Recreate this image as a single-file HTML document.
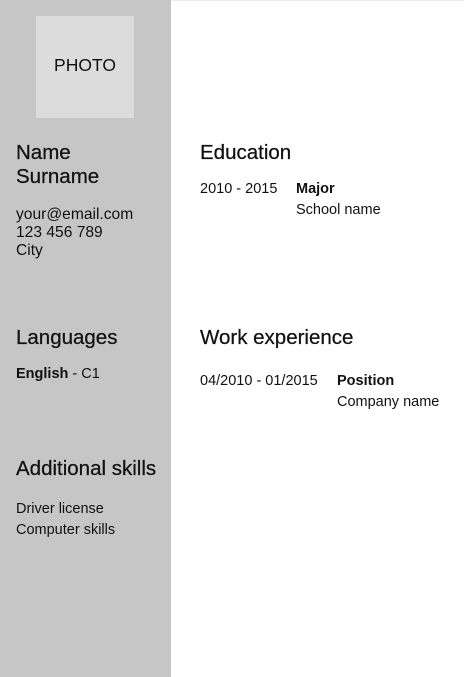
<!DOCTYPE html>
<html><head><style>
body{margin:0;width:464px;height:677px;position:relative;background:#fff;font-family:"Liberation Sans",sans-serif;color:#111;overflow:hidden}
.side{position:absolute;left:0;top:0;width:171px;height:677px;background:#c6c6c6}
.top{position:absolute;left:171px;top:0;right:0;height:1px;background:#e6eef4}
.photo{position:absolute;left:36px;top:16px;width:98px;height:102px;background:#dcdcdc;font-size:17.5px;line-height:98px;text-align:center}
.a{position:absolute;white-space:nowrap}
h2{margin:0;font-weight:normal;font-size:20.5px;line-height:24px;-webkit-text-stroke:0.25px #111}
.t{font-size:15.6px;line-height:18px}
.s{font-size:14.5px;line-height:21px}
b{-webkit-text-stroke:0;font-weight:bold}
</style></head><body>
<div class="side"></div><div class="top"></div>
<div class="photo">PHOTO</div>
<div class="a" style="left:16px;top:141px"><h2>Name<br>Surname</h2></div>
<div class="a t" style="left:16px;top:206px">your@email.com<br>123 456 789<br>City</div>
<div class="a" style="left:16px;top:326px"><h2>Languages</h2></div>
<div class="a s" style="left:16px;top:364px"><b>English</b> - C1</div>
<div class="a" style="left:16px;top:457px"><h2>Additional skills</h2></div>
<div class="a s" style="left:16px;top:499px">Driver license<br>Computer skills</div>
<div class="a" style="left:200px;top:141px"><h2>Education</h2></div>
<div class="a s" style="left:200px;top:179px">2010 - 2015</div>
<div class="a s" style="left:296px;top:179px"><b>Major</b><br>School name</div>
<div class="a" style="left:200px;top:326px"><h2>Work experience</h2></div>
<div class="a s" style="left:200px;top:371px">04/2010 - 01/2015</div>
<div class="a s" style="left:337px;top:371px"><b>Position</b><br>Company name</div>
</body></html>
